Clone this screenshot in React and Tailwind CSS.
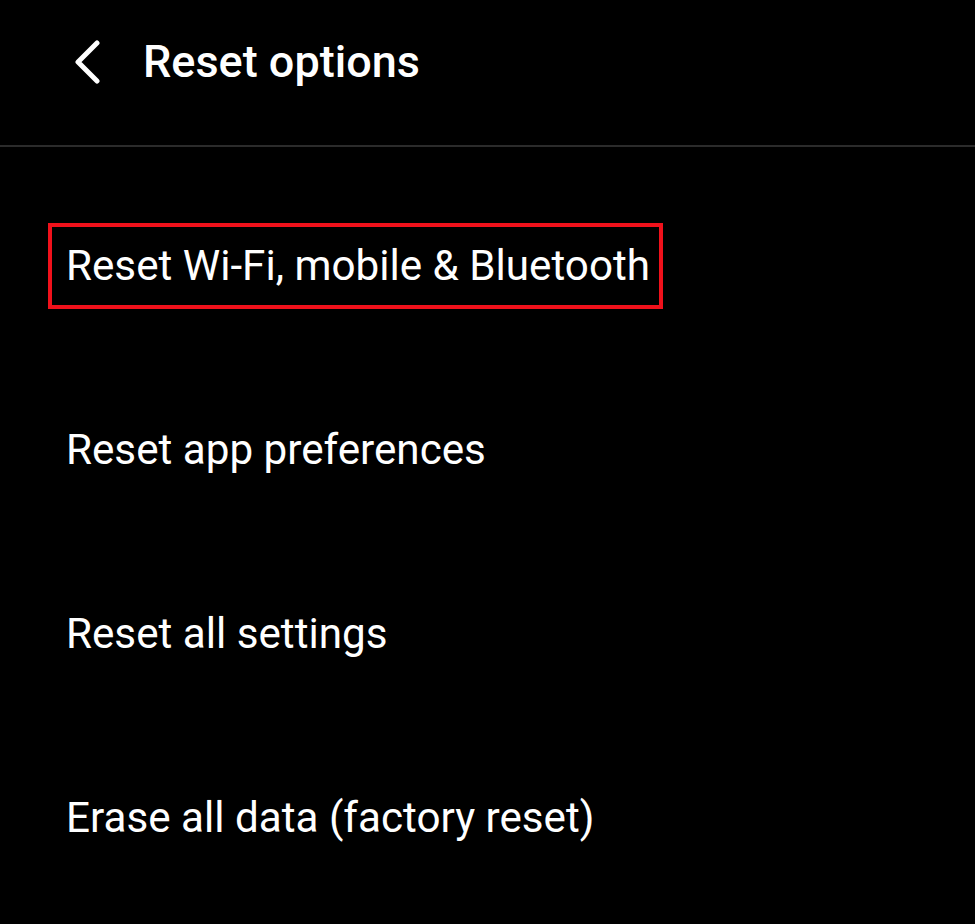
import React from "react";

const items = [
  "Reset Wi-Fi, mobile & Bluetooth",
  "Reset app preferences",
  "Reset all settings",
  "Erase all data (factory reset)",
];

export default function App() {
  return (
    <div
      className="w-[975px] h-[924px] bg-black text-white overflow-hidden"
      style={{ fontFamily: "Roboto, 'Noto Sans', sans-serif" }}
    >
      <header className="h-[145px] flex items-center pb-[22px]">
        <button className="ml-[72px] w-[32px] h-[44px] flex items-center justify-center">
          <svg viewBox="0 0 32 44" className="w-[32px] h-[44px]" fill="none">
            <path
              d="M25 3 L6 22 L25 41"
              stroke="white"
              strokeWidth="5"
              strokeLinecap="round"
              strokeLinejoin="round"
            />
          </svg>
        </button>
        <h1 className="ml-[39px] text-[45px] font-medium leading-none">Reset options</h1>
      </header>
      <div className="h-[2px] bg-[#2b2b2b]" />
      <ul className="pt-[27px]">
        {items.map((label, i) => (
          <li key={label} className="h-[184px] flex items-center pl-[48px]">
            {i === 0 ? (
              <span className="h-[86px] flex items-center border-4 border-[#f0111b] pl-[14px] pr-[9px] text-[42.2px] leading-none">
                {label}
              </span>
            ) : (
              <span className="pl-[18px] text-[42.2px] leading-none">{label}</span>
            )}
          </li>
        ))}
      </ul>
    </div>
  );
}
